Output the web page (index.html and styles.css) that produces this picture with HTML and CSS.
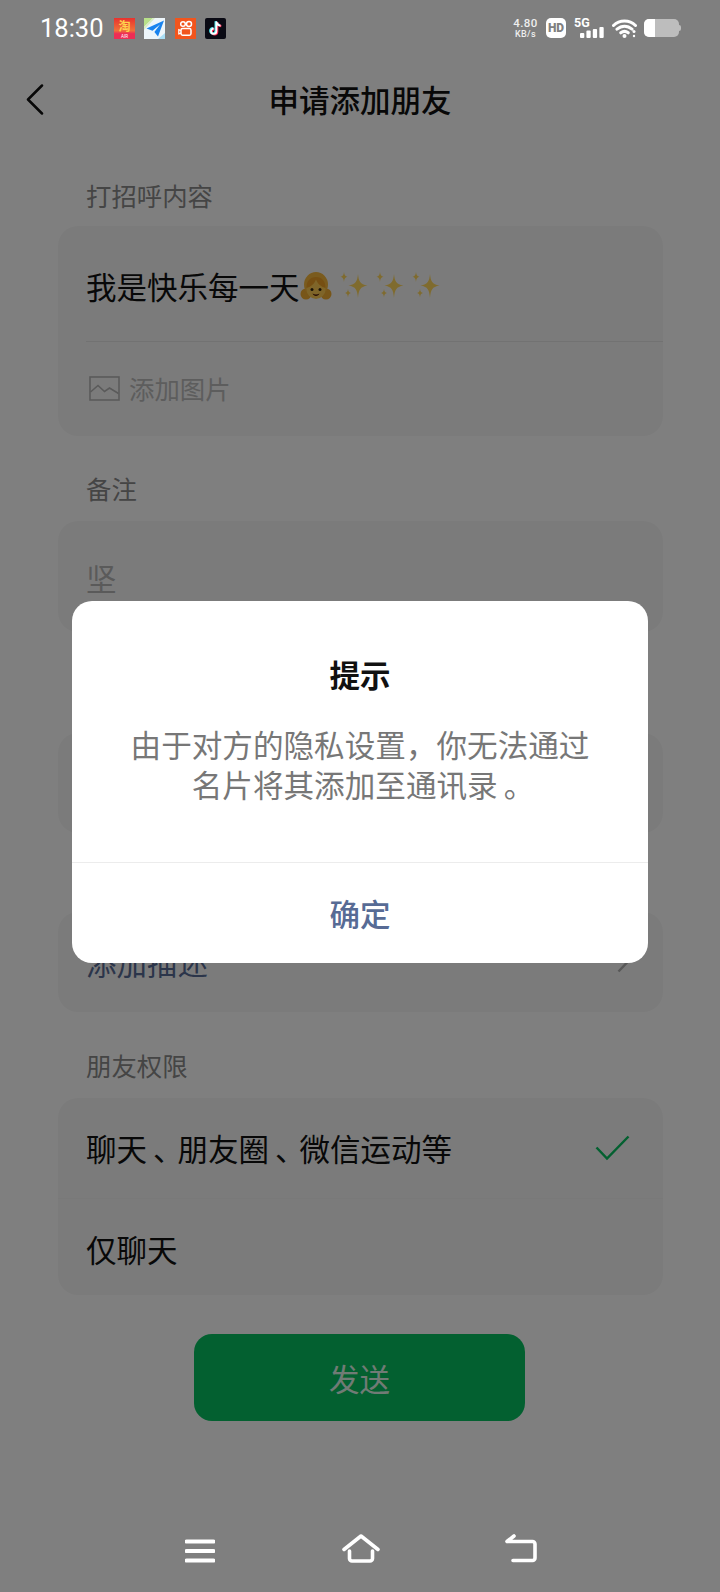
FILE: index.html
```html
<!DOCTYPE html>
<html lang="zh-CN">
<head>
<meta charset="utf-8">
<title>申请添加朋友</title>
<link rel="stylesheet" href="styles.css">
</head>
<body>
<div class="screen">
  <div class="statusbar">
    <span class="clock">18:30</span>
    <div class="app-icons">
      <svg class="app-icon" viewBox="0 0 21 21">
        <defs><linearGradient id="tb" x1="0" y1="0" x2="0" y2="1"><stop offset="0" stop-color="#e8322e"/><stop offset=".6" stop-color="#f0703a"/><stop offset=".75" stop-color="#ee2d55"/></linearGradient></defs>
        <rect width="21" height="21" fill="url(#tb)"/>
        <text x="10.5" y="13" class="tb-char">淘</text>
        <text x="10.5" y="19.6" class="tb-sub">AIR</text>
      </svg>
      <svg class="app-icon" viewBox="0 0 21 21">
        <rect width="21" height="21" fill="#eef6fb"/>
        <path d="M0 0h9L0 9z" fill="#b8e08a"/>
        <path d="M0 9l9-9h2L0 12z" fill="#d9ecc4"/>
        <path d="M14 21l7-6v6z" fill="#a9def5"/>
        <path d="M20 2.5L2.5 10.5l6 2.2L16 6.5l-5.6 7.4 3.6 4.5z" fill="#1a84ef"/>
      </svg>
      <svg class="app-icon" viewBox="0 0 21 21">
        <rect width="21" height="21" fill="#f2551d"/>
        <circle cx="8" cy="6" r="2.3" fill="none" stroke="#fff" stroke-width="1.5"/>
        <circle cx="14" cy="6" r="2.5" fill="none" stroke="#fff" stroke-width="1.5"/>
        <rect x="6" y="10.6" width="10" height="6.6" rx="1.6" fill="none" stroke="#fff" stroke-width="1.5"/>
        <path d="M6 12.5l-2.2-.8v4.2l2.2-.8" fill="none" stroke="#fff" stroke-width="1.2"/>
      </svg>
      <svg class="app-icon" viewBox="0 0 21 21">
        <rect width="21" height="21" rx="2" fill="#0a0a14"/>
        <path d="M11.4 3.6v9.6a2.7 2.7 0 1 1-2.7-2.7M11.4 3.6c.3 2.4 1.7 3.7 4.1 4" fill="none" stroke="#ff2d55" stroke-width="2.2" transform="translate(.8 .6)"/>
        <path d="M11.4 3.6v9.6a2.7 2.7 0 1 1-2.7-2.7M11.4 3.6c.3 2.4 1.7 3.7 4.1 4" fill="none" stroke="#4fe6ee" stroke-width="2.2" transform="translate(-.8 -.4)"/>
        <path d="M11.4 3.6v9.6a2.7 2.7 0 1 1-2.7-2.7M11.4 3.6c.3 2.4 1.7 3.7 4.1 4" fill="none" stroke="#fff" stroke-width="1.8"/>
      </svg>
    </div>
    <div class="sys-icons">
      <div class="netspeed"><span class="netspeed-value">4.80</span><span class="netspeed-unit">KB/s</span></div>
      <span class="hd-badge">HD</span>
      <div class="signal">
        <span class="signal-label">5G</span>
        <svg class="signal-bars" viewBox="0 0 24 11"><rect x="0" y="6" width="4.3" height="5" rx="1"/><rect x="6.4" y="3.5" width="4.3" height="7.5" rx="1"/><rect x="12.8" y="2" width="4.3" height="9" rx="1"/><rect x="19.4" y="0" width="4.3" height="11" rx="1"/></svg>
      </div>
      <svg class="wifi" viewBox="0 0 25 19">
        <path d="M1.5 6.5C7.5 .6 17.5 .6 23.5 6.5M5 10.2c4.5-4 10.500-4 15 0M8.800 13.800c2.400-1.900 5-1.900 7.400 0" fill="none" stroke="#fff" stroke-width="3" stroke-linecap="round"/>
        <circle cx="12.5" cy="17" r="2" fill="#fff"/>
        <circle cx="22" cy="12.5" r="1.5" fill="#fff"/>
        <circle cx="22" cy="17" r="1.2" fill="#fff"/>
      </svg>
      <div class="battery"><span class="battery-level"></span></div>
    </div>
  </div>

  <header class="titlebar">
    <svg class="back" viewBox="0 0 18 31"><path d="M16 1.500L2 15.500l14 14" fill="none" stroke="#111" stroke-width="2.500" stroke-linecap="round" stroke-linejoin="round"/></svg>
    <h1 class="title">申请添加朋友</h1>
  </header>

  <main class="form">
    <section class="group">
      <div class="label">打招呼内容</div>
      <div class="card">
        <div class="greeting">
          <span class="greeting-text">我是快乐每一天</span>
          <svg class="emoji" viewBox="0 0 32 30">
            <circle cx="6" cy="23" r="5.500" fill="#f0ad32"/>
            <circle cx="26" cy="23" r="5.500" fill="#f0ad32"/>
            <ellipse cx="16" cy="13.500" rx="12" ry="12.500" fill="#f4b63c"/>
            <ellipse cx="16" cy="18" rx="9.500" ry="10" fill="#ffcb52"/>
            <path d="M6.500 17c4-1 8-4 9.500-8.500 1.500 4.500 5.500 7.500 9.500 8.500C25.500 10 22 6 16 6S6.500 10 6.500 17z" fill="#ec9f26"/>
            <circle cx="12" cy="18.500" r="1.500" fill="#33240f"/>
            <circle cx="20" cy="18.500" r="1.500" fill="#33240f"/>
            <path d="M12.500 22.500c2.300 1.300 4.700 1.300 7 0-1 3.200-6 3.200-7 0z" fill="#4f1a0c"/>
          </svg>
          <svg class="sparkles" viewBox="0 0 28 30"><use href="#spark-group"/></svg>
          <svg class="sparkles" viewBox="0 0 28 30"><use href="#spark-group"/></svg>
          <svg class="sparkles" viewBox="0 0 28 30"><use href="#spark-group"/></svg>
        </div>
        <div class="add-image">
          <svg class="image-icon" viewBox="0 0 31 25"><rect x="1" y="1" width="29" height="23" fill="none" stroke="#b4b4b4" stroke-width="1.600"/><path d="M1.500 16l7.500-6.500 6.500 6 5-3.500 9 5.500" fill="none" stroke="#b4b4b4" stroke-width="1.600"/></svg>
          <span class="placeholder-small">添加图片</span>
        </div>
      </div>
    </section>

    <section class="group">
      <div class="label">备注</div>
      <div class="card card-remark"><span class="remark">坚</span></div>
    </section>

    <div class="card card-tags"></div>

    <div class="card card-desc">
      <span class="link-text">添加描述</span>
      <svg class="chevron" viewBox="0 0 12 22"><path d="M1.500 1.500l9 9.500-9 9.500" fill="none" stroke="#b0b0b0" stroke-width="2.500"/></svg>
    </div>

    <section class="group">
      <div class="label">朋友权限</div>
      <div class="card">
        <div class="option option-first">
          <span class="option-text">聊天<span class="punct">、</span>朋友圈<span class="punct">、</span>微信运动等</span>
          <svg class="check" viewBox="0 0 35 26"><path d="M1.500 12.500l10.500 11 21.500-22" fill="none" stroke="#07c160" stroke-width="2.500"/></svg>
        </div>
        <div class="option option-last"><span class="option-text">仅聊天</span></div>
      </div>
    </section>

    <div class="send-row"><button class="send">发送</button></div>
  </main>

  <nav class="navbar">
    <svg class="nav-icon" viewBox="0 0 30 24"><path d="M1.500 2.500h27M1.500 12h27M1.500 21.500h27" fill="none" stroke="#fff" stroke-width="4" stroke-linecap="round"/></svg>
    <svg class="nav-icon nav-home" viewBox="0 0 38 29"><path d="M2 15.500L19 2l17 13.500M7.500 17v7.500a2.500 2.500 0 0 0 2.500 2.500h18a2.500 2.500 0 0 0 2.500-2.500V17" fill="none" stroke="#fff" stroke-width="3.600" stroke-linecap="round" stroke-linejoin="round"/></svg>
    <svg class="nav-icon nav-back" viewBox="0 0 33 29"><path d="M3 7.500h25.500a2.500 2.500 0 0 1 2.500 2.500v14a2.500 2.500 0 0 1-2.500 2.500H9M10 2L3 7.500" fill="none" stroke="#fff" stroke-width="3.600" stroke-linecap="round" stroke-linejoin="round"/></svg>
  </nav>

  <div class="scrim"></div>

  <div class="dialog">
    <div class="dialog-body">
      <h2 class="dialog-title">提示</h2>
      <p class="dialog-text">由于对方的隐私设置，你无法通过<br>名片将其添加至通讯录<span class="punct">。</span></p>
    </div>
    <button class="dialog-action">确定</button>
  </div>

  <svg class="defs" width="0" height="0">
    <defs>
      <g id="spark-group" fill="#ffd65c">
        <path d="M18 3c.8 7.500 2 10 9.500 11.500C20 16 18.800 18.500 18 27c-.8-8.500-2-11-9.500-12.500C16 13 17.200 10.500 18 3z"/>
        <path d="M4 1c.4 3 1 4 3.500 4.800C5 6.600 4.400 7.600 4 11 3.600 7.600 3 6.600.5 5.800 3 5 3.600 4 4 1z"/>
        <path d="M8 18c.4 2.600 1 3.400 3 4-2 .6-2.600 1.400-3 4.500-.4-3.100-1-3.900-3-4.500 2-.6 2.600-1.400 3-4z"/>
      </g>
    </defs>
  </svg>
</div>
</body>
</html>
```
FILE: styles.css
```css
* {
  box-sizing: border-box;
}

html,
body {
  margin: 0;
  padding: 0;
}

body {
  font-family: "Noto Sans CJK SC", "Noto Sans", sans-serif;
  background: #fff;
  color: #111;
}

.screen {
  position: relative;
  width: 720px;
  height: 1592px;
  overflow: hidden;
  display: flex;
  flex-direction: column;
  background: #fff;
}

/* Status bar */
.statusbar {
  position: relative;
  z-index: 3;
  height: 56px;
  display: flex;
  align-items: center;
  padding-left: 40px;
  color: #fff;
}

.clock {
  font-family: Roboto, sans-serif;
  font-size: 25.5px;
  width: 74px;
}

.app-icons {
  display: flex;
  gap: 9.25px;
}

.app-icon {
  width: 21px;
  height: 21px;
  display: block;
}

.tb-char {
  font-size: 12px;
  fill: #ffd34d;
  text-anchor: middle;
  font-weight: 700;
}

.tb-sub {
  font-size: 4.5px;
  fill: #fff;
  text-anchor: middle;
  font-family: Roboto, sans-serif;
}

.sys-icons {
  margin-left: auto;
  display: flex;
  align-items: center;
  width: 172px;
  margin-right: 36px;
}

.netspeed {
  display: flex;
  flex-direction: column;
  align-items: center;
  width: 27px;
  font-family: Roboto, sans-serif;
  font-weight: 500;
  color: #eee;
}

.netspeed-value {
  font-size: 11.5px;
  line-height: 12px;
  letter-spacing: .4px;
}

.netspeed-unit {
  font-size: 9px;
  line-height: 10px;
  letter-spacing: .4px;
}

.hd-badge {
  width: 20px;
  height: 20px;
  margin-left: 7px;
  border-radius: 5px;
  background: #fff;
  color: #808080;
  font-family: Roboto, sans-serif;
  font-size: 12px;
  font-weight: 900;
  line-height: 20px;
  text-align: center;
}

.signal {
  position: relative;
  width: 30px;
  height: 20px;
  margin-left: 8px;
}

.signal-label {
  position: absolute;
  left: 0;
  top: -2px;
  font-family: Roboto, sans-serif;
  font-size: 12.5px;
  font-weight: 700;
  line-height: 14px;
}

.signal-bars {
  position: absolute;
  left: 6px;
  bottom: 0;
  width: 24px;
  height: 11px;
  fill: #fff;
}

.wifi {
  width: 25px;
  height: 19px;
  margin-left: 8px;
}

.battery {
  position: relative;
  width: 35px;
  height: 18px;
  margin-left: 7px;
  border-radius: 5px;
  background: #bdbdbd;
  overflow: visible;
}

.battery::after {
  content: "";
  position: absolute;
  right: -2px;
  top: 6px;
  width: 2px;
  height: 6px;
  border-radius: 0 2px 2px 0;
  background: #bdbdbd;
}

.battery-level {
  display: block;
  width: 11px;
  height: 18px;
  border-radius: 5px 0 0 5px;
  background: #fff;
}

/* Title bar */
.titlebar {
  position: relative;
  height: 90px;
  padding-bottom: 4px;
  display: flex;
  align-items: center;
  justify-content: center;
}

.back {
  position: absolute;
  left: 26px;
  top: 28px;
  width: 18px;
  height: 31px;
}

.title {
  margin: 0;
  font-size: 30.5px;
  font-weight: 500;
  line-height: 86px;
  color: #111;
}

/* Form */
.form {
  display: flex;
  flex-direction: column;
  padding: 34px 57px 0 58px;
}

.group {
  display: flex;
  flex-direction: column;
}

.group + .group {
  margin-top: 37px;
}

.label {
  height: 30px;
  margin: 0 0 16px 28px;
  font-size: 25.4px;
  line-height: 30px;
  color: #8a8a8a;
}

.group + .group .label,
.card-desc + .group .label {
  margin-bottom: 18px;
}

.card {
  border-radius: 20px;
  background: #f7f7f7;
}

.greeting {
  height: 116px;
  display: flex;
  align-items: center;
  margin-left: 28px;
  padding-top: 4px;
  border-bottom: 1px solid #e4e4e4;
}

.greeting-text {
  font-size: 30.5px;
  line-height: 40px;
  color: #111;
}

.emoji {
  width: 32px;
  height: 30px;
}

.sparkles {
  width: 28px;
  height: 30px;
  margin-left: 8px;
}

.add-image {
  height: 94px;
  display: flex;
  align-items: center;
  padding: 0 0 2px 31px;
  gap: 9px;
}

.image-icon {
  width: 31px;
  height: 25px;
}

.placeholder-small {
  font-size: 25.4px;
  line-height: 30px;
  color: #bbb;
}

.card-remark {
  height: 111px;
  padding: 37px 0 0 28px;
}

.remark {
  font-size: 30.5px;
  line-height: 40px;
  color: #b4b4b4;
}

.card-tags {
  height: 100px;
  margin-top: 101px;
}

.card-desc {
  height: 100px;
  margin-top: 79px;
  display: flex;
  align-items: center;
  justify-content: space-between;
  padding: 0 34px 0 28px;
}

.link-text {
  font-size: 30.5px;
  line-height: 40px;
  color: #576b95;
}

.chevron {
  width: 12px;
  height: 22px;
}

.card-desc + .group {
  margin-top: 38px;
}

.option {
  height: 96px;
  display: flex;
  align-items: center;
  justify-content: space-between;
  padding: 0 33px 0 28px;
}

.option-first {
  height: 101px;
  border-bottom: 1px solid #f2f2f2;
}

.option-last {
  padding-top: 4px;
}

.option-text {
  font-size: 30.5px;
  line-height: 40px;
  color: #111;
}

/* Enumeration comma and full stop sit mid-cell; the advance stays one cell wide */
.punct {
  padding-left: 6px;
  letter-spacing: -6px;
}

.check {
  width: 35px;
  height: 26px;
}

.send-row {
  display: flex;
  justify-content: center;
  margin-top: 39px;
  padding-right: 2px;
}

.send {
  width: 331px;
  height: 87px;
  border: 0;
  border-radius: 18px;
  background: #07c160;
  color: rgba(255, 255, 255, .9);
  font-family: inherit;
  font-size: 30.5px;
  font-weight: 400;
}

/* Navigation bar */
.navbar {
  position: relative;
  z-index: 3;
  margin-top: auto;
  height: 60px;
  display: flex;
  align-items: flex-start;
}

.nav-icon {
  width: 30px;
  height: 24px;
  margin-left: 185px;
  margin-top: 7px;
}

.nav-home {
  width: 38px;
  height: 29px;
  margin-left: 127px;
  margin-top: 2px;
}

.nav-back {
  width: 33px;
  height: 29px;
  margin-left: 124px;
  margin-top: 2px;
}

/* Dialog over a dimmed page */
.scrim {
  position: absolute;
  inset: 0;
  z-index: 1;
  background: rgba(0, 0, 0, .5);
}

.dialog {
  position: absolute;
  z-index: 2;
  left: 72px;
  top: 601px;
  width: 576px;
  height: 362px;
  display: flex;
  flex-direction: column;
  border-radius: 20px;
  background: #fff;
  overflow: hidden;
}

.dialog-body {
  height: 262px;
  padding-top: 53px;
  text-align: center;
  border-bottom: 1px solid #ececec;
}

.dialog-title {
  margin: 0;
  font-size: 30.5px;
  font-weight: 700;
  line-height: 40px;
  color: #111;
}

.dialog-text {
  margin: 30px 0 0;
  font-size: 30.6px;
  line-height: 40px;
  color: #777;
}

.dialog-action {
  flex: 1;
  border: 0;
  background: none;
  color: #576b95;
  font-family: inherit;
  font-size: 30.5px;
  font-weight: 500;
}

.defs {
  position: absolute;
}
```
